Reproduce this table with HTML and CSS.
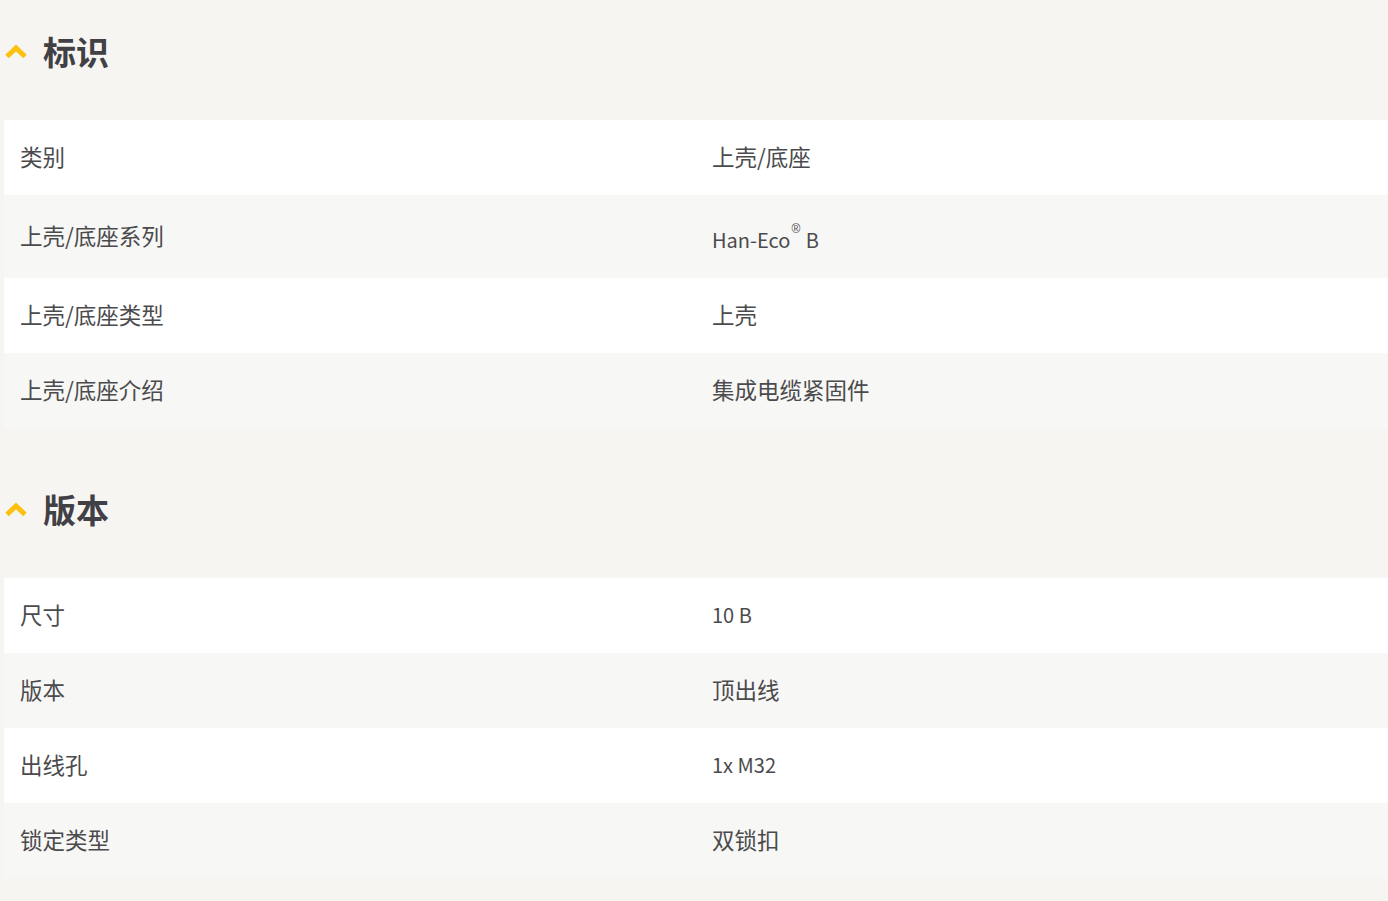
FILE: index.html
```html
<!DOCTYPE html>
<html lang="zh">
<head>
<meta charset="utf-8">
<title>标识</title>
<link rel="stylesheet" href="styles.css">
</head>
<body>
<section class="section">
  <h2 class="section-title">
    <svg class="chevron" width="24" height="16" viewBox="0 0 24 16" aria-hidden="true"><polyline points="3,13.5 12,5 21,13.5" fill="none" stroke="#fcc10f" stroke-width="5" stroke-linejoin="miter"/></svg>
    <span>标识</span>
  </h2>
  <table class="attrs">
    <tr><td>类别</td><td>上壳/底座</td></tr>
    <tr><td>上壳/底座系列</td><td class="latin">Han-Eco<sup class="reg">®</sup> B</td></tr>
    <tr><td>上壳/底座类型</td><td>上壳</td></tr>
    <tr><td>上壳/底座介绍</td><td>集成电缆紧固件</td></tr>
  </table>
</section>
<section class="section">
  <h2 class="section-title">
    <svg class="chevron" width="24" height="16" viewBox="0 0 24 16" aria-hidden="true"><polyline points="3,13.5 12,5 21,13.5" fill="none" stroke="#fcc10f" stroke-width="5" stroke-linejoin="miter"/></svg>
    <span>版本</span>
  </h2>
  <table class="attrs">
    <tr><td>尺寸</td><td class="latin">10 B</td></tr>
    <tr><td>版本</td><td>顶出线</td></tr>
    <tr><td>出线孔</td><td class="latin">1x M32</td></tr>
    <tr><td>锁定类型</td><td>双锁扣</td></tr>
  </table>
</section>
</body>
</html>
```
FILE: styles.css
```css
html, body {
  margin: 0;
  padding: 0;
  background: #f6f5f2;
}
body {
  padding: 0 0 0 4px;
  font-family: "Noto Sans CJK SC", "Noto Sans", sans-serif;
  color: #4b4b4d;
  overflow: hidden;
}
.section {
  padding-top: 31px;
}
.section + .section {
  margin-top: 30px;
}
.section-title {
  display: flex;
  align-items: center;
  gap: 15px;
  margin: 0 0 49px 0;
  height: 40px;
  font-size: 33px;
  font-weight: 700;
  line-height: 40px;
  color: #414044;
}
.chevron {
  display: block;
}
.attrs {
  width: 100%;
  border-collapse: collapse;
  table-layout: fixed;
  font-size: 22.5px;
  line-height: 33px;
}
.attrs tr:nth-child(odd) {
  background: #ffffff;
}
.attrs tr:nth-child(even) {
  background: #f7f7f5;
}
.attrs td {
  padding: 20px 16px 22px;
  vertical-align: middle;
}
.attrs td.latin {
  font-size: 20px;
}
.reg {
  font-family: "Liberation Sans", "DejaVu Sans", sans-serif;
  font-size: 12px;
  vertical-align: 15px;
  line-height: 28px;
  margin-left: 1px;
  margin-right: 1px;
  color: #4b4b4d;
}
```
